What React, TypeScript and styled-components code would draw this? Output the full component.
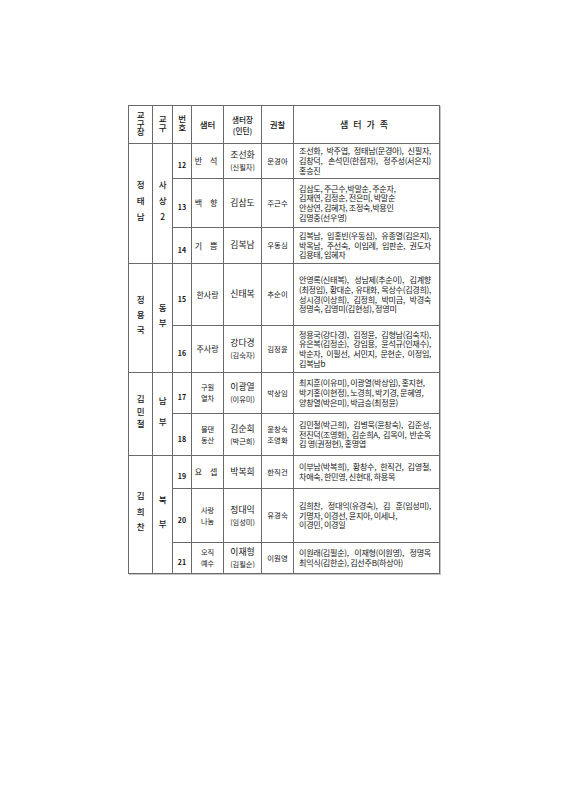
import React from 'react';
import styled, { createGlobalStyle } from 'styled-components';

const GlobalStyle = createGlobalStyle`
  html, body {
    margin: 0;
    padding: 0;
    background: #ffffff;
  }
  body {
    font-family: "Noto Sans CJK KR", "Noto Sans", sans-serif;
    color: #151515;
  }
`;

const Page = styled.div`
  width: 565px;
  height: 800px;
  box-sizing: border-box;
  padding: 105px 0 0 128px;
`;

const Table = styled.table`
  border-collapse: collapse;
  table-layout: fixed;
  width: 311px;
  border: 1px solid #3a3a3a;
  box-shadow: 1px 1px 0 #c4c4c4;
`;

const Row = styled.tr<{ $h: number }>`
  height: ${({ $h }) => $h}px;
`;

const Cell = styled.td`
  border: 1px solid #6a6a6a;
  padding: 0;
  text-align: center;
  vertical-align: middle;
  overflow: hidden;
`;

const HeadCell = styled(Cell).attrs({ as: 'th' })`
  font-weight: 500;
  font-size: 8.5px;
  line-height: 12.4px;
`;

const HeadSmall = styled.div`
  font-size: 7.6px;
  line-height: 11px;
  white-space: nowrap;
`;

// stacked hangul, one text node written top to bottom
const Vertical = styled.span<{ $size: number; $step: number }>`
  display: inline-block;
  writing-mode: vertical-rl;
  text-orientation: upright;
  font-size: ${({ $size }) => $size}px;
  font-weight: 500;
  line-height: 1;
  letter-spacing: ${({ $size, $step }) => $step - $size}px;
  padding-top: ${({ $size, $step }) => $step - $size}px;
`;

const FamilyHead = styled.span`
  font-size: 9px;
  font-weight: 500;
  letter-spacing: 5px;
`;

const Num = styled.span`
  font-size: 7px;
  font-weight: 700;
`;

const Name = styled.div<{ $size: number; $spacing?: number }>`
  font-size: ${({ $size }) => $size}px;
  line-height: ${({ $size }) => $size * 1.46}px;
  letter-spacing: ${({ $spacing }) => $spacing || 0}px;
  white-space: nowrap;
`;

const Family = styled(Cell)`
  text-align: left;
  padding: 0 8px 0 5px;
`;

const Line = styled.div<{ $justify?: boolean }>`
  font-size: 8.1px;
  line-height: 9.7px;
  letter-spacing: -0.3px;
  white-space: nowrap;
  text-align: ${({ $justify }) => ($justify ? 'justify' : 'left')};
  text-align-last: ${({ $justify }) => ($justify ? 'justify' : 'left')};
`;

type Entry = {
  no: number;
  h: number;
  cell: string[];
  cellSpacing?: number;
  leader: string[];
  guard: string[];
  family: { text: string; justify?: boolean }[];
};

type Group = {
  leader: string;
  leaderStep: number;
  district: string;
  districtStep: number;
  entries: Entry[];
};

const groups: Group[] = [
  {
    leader: '정태남',
    leaderStep: 16,
    district: '사상2',
    districtStep: 16,
    entries: [
      {
        no: 12,
        h: 35,
        cell: ['반 석'],
        cellSpacing: 3,
        leader: ['조선화', '(신필자)'],
        guard: ['문경아'],
        family: [
          { text: '조선화, 박주엽, 정태남(문경아), 신필자,', justify: true },
          { text: '김창덕, 손석민(한점자), 정주성(서은지)', justify: true },
          { text: '홍승진' },
        ],
      },
      {
        no: 13,
        h: 49,
        cell: ['백 향'],
        cellSpacing: 3,
        leader: ['김삼도'],
        guard: ['주근수'],
        family: [
          { text: '김삼도, 주근수,박말순, 주순자,' },
          { text: '김재연, 김정순, 전은미, 박말순' },
          { text: '안상연, 김혜자, 조정숙,박용인' },
          { text: '김명중(선우영)' },
        ],
      },
      {
        no: 14,
        h: 36,
        cell: ['기 쁨'],
        cellSpacing: 3,
        leader: ['김복남'],
        guard: ['우동심'],
        family: [
          { text: '김복남, 임홍빈(우동심), 유종열(김은지),', justify: true },
          { text: '박옥남, 주선숙, 이임례, 임판순, 권도자', justify: true },
          { text: '김용태, 임혜자' },
        ],
      },
    ],
  },
  {
    leader: '정용국',
    leaderStep: 15,
    district: '동부',
    districtStep: 15,
    entries: [
      {
        no: 15,
        h: 62,
        cell: ['한사랑'],
        leader: ['신태복'],
        guard: ['추순이'],
        family: [
          { text: '안영록(신태복), 성남제(추순이), 김계향', justify: true },
          { text: '(최정임), 황대순, 유대화, 목상수(김경희),', justify: true },
          { text: '성시경(이상희), 김정희, 박미금, 박경숙', justify: true },
          { text: '정명숙, 김영미(김현성), 정영미' },
        ],
      },
      {
        no: 16,
        h: 47,
        cell: ['주사랑'],
        leader: ['강다경', '(김숙자)'],
        guard: ['김정윤'],
        family: [
          { text: '정용국(강다경), 김정윤, 김형남(김숙자),', justify: true },
          { text: '유은복(김정순), 강임용, 윤석규(인재수),', justify: true },
          { text: '박순자, 이필선, 서민지, 문현순, 이정임,', justify: true },
          { text: '김복남b' },
        ],
      },
    ],
  },
  {
    leader: '김민철',
    leaderStep: 12.5,
    district: '남부',
    districtStep: 21,
    entries: [
      {
        no: 17,
        h: 41,
        cell: ['구원', '열차'],
        leader: ['이광열', '(이유미)'],
        guard: ['박상임'],
        family: [
          { text: '최지훈(이유미), 이광열(박상임), 홍지현,' },
          { text: '박기홍(이현정), 노경희, 박기경, 문혜영,' },
          { text: '양창열(박은미), 박금승(최정윤)' },
        ],
      },
      {
        no: 18,
        h: 42,
        cell: ['물댄', '동산'],
        leader: ['김순희', '(박근희)'],
        guard: ['윤창숙', '조영화'],
        family: [
          { text: '김민철(박근희), 김병욱(윤창숙), 김준성,', justify: true },
          { text: '전진덕(조영화), 김순희A, 김옥이, 반순옥', justify: true },
          { text: '김  영(권정현), 홍명엽' },
        ],
      },
    ],
  },
  {
    leader: '김희찬',
    leaderStep: 15.5,
    district: '북부',
    districtStep: 24,
    entries: [
      {
        no: 19,
        h: 33,
        cell: ['요 셉'],
        cellSpacing: 3,
        leader: ['박복희'],
        guard: ['한직건'],
        family: [
          { text: '이부남(박복희), 황창수, 한직건, 김영철,', justify: true },
          { text: '차애숙, 한민영, 신현대, 하용목' },
        ],
      },
      {
        no: 20,
        h: 54,
        cell: ['사랑', '나눔'],
        leader: ['정대익', '(임성미)'],
        guard: ['유경숙'],
        family: [
          { text: '김희찬, 정대익(유경숙), 김  훈(임성미),', justify: true },
          { text: '기명자, 이경선, 윤지아, 이세나,' },
          { text: '이경민, 이경일' },
        ],
      },
      {
        no: 21,
        h: 31,
        cell: ['오직', '예수'],
        leader: ['이재형', '(김필순)'],
        guard: ['이원영'],
        family: [
          { text: '이원래(김필순), 이재형(이원영), 정명옥', justify: true },
          { text: '최익식(김한순), 김선주B(하상아)' },
        ],
      },
    ],
  },
];

const LeaderCell = ({ lines }: { lines: string[] }) => (
  <Cell>
    {lines.map((l, i) => (
      <Name key={i} $size={i === 0 ? 8.8 : 7.2}>
        {l}
      </Name>
    ))}
  </Cell>
);

export default function App() {
  return (
    <Page>
      <GlobalStyle />
      <Table>
        <colgroup>
          <col style={{ width: 24 }} />
          <col style={{ width: 20 }} />
          <col style={{ width: 19 }} />
          <col style={{ width: 32 }} />
          <col style={{ width: 38 }} />
          <col style={{ width: 32 }} />
          <col style={{ width: 146 }} />
        </colgroup>
        <thead>
          <Row $h={38}>
            <HeadCell>
              <Vertical $size={8.5} $step={8.5}>교구장</Vertical>
            </HeadCell>
            <HeadCell>
              <Vertical $size={8.5} $step={8.5}>교구</Vertical>
            </HeadCell>
            <HeadCell>
              <Vertical $size={8.5} $step={8.5}>번호</Vertical>
            </HeadCell>
            <HeadCell>샘터</HeadCell>
            <HeadCell>
              <HeadSmall>샘터장</HeadSmall>
              <HeadSmall>(인턴)</HeadSmall>
            </HeadCell>
            <HeadCell>권찰</HeadCell>
            <HeadCell>
              <FamilyHead>샘터가족</FamilyHead>
            </HeadCell>
          </Row>
        </thead>
        <tbody>
          {groups.map((g) =>
            g.entries.map((e, idx) => (
              <Row key={e.no} $h={e.h}>
                {idx === 0 && (
                  <>
                    <Cell rowSpan={g.entries.length}>
                      <Vertical $size={8.5} $step={g.leaderStep}>
                        {g.leader}
                      </Vertical>
                    </Cell>
                    <Cell rowSpan={g.entries.length}>
                      <Vertical $size={8.5} $step={g.districtStep}>
                        {g.district}
                      </Vertical>
                    </Cell>
                  </>
                )}
                <Cell>
                  <Num>{e.no}</Num>
                </Cell>
                <Cell>
                  {e.cell.map((c, i) => (
                    <Name key={i} $size={e.cell.length > 1 ? 7.2 : 8} $spacing={e.cellSpacing}>
                      {c}
                    </Name>
                  ))}
                </Cell>
                <LeaderCell lines={e.leader} />
                <Cell>
                  {e.guard.map((c, i) => (
                    <Name key={i} $size={7.4}>
                      {c}
                    </Name>
                  ))}
                </Cell>
                <Family>
                  {e.family.map((f, i) => (
                    <Line key={i} $justify={f.justify}>
                      {f.text}
                    </Line>
                  ))}
                </Family>
              </Row>
            ))
          )}
        </tbody>
      </Table>
    </Page>
  );
}
